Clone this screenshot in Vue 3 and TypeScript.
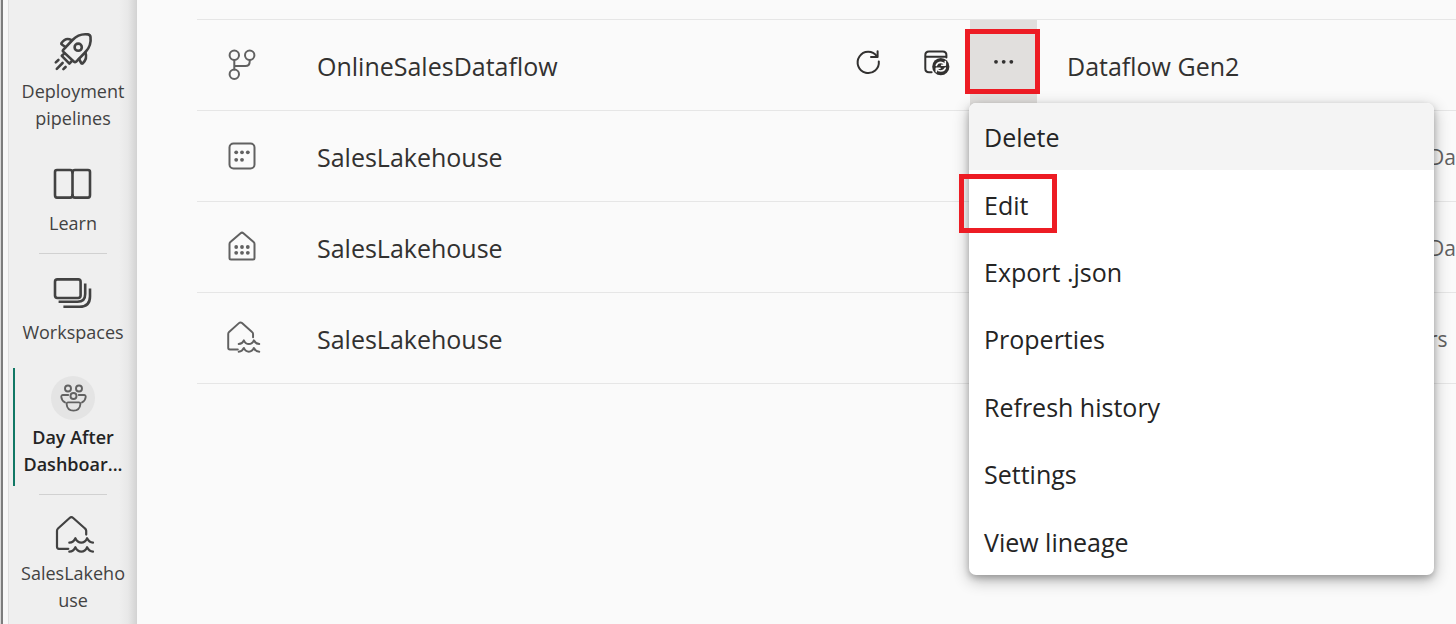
<script setup lang="ts">
import { ref } from 'vue'

type RowIcon = 'dataflow' | 'dataset' | 'endpoint' | 'lakehouse'

interface Row {
  icon: RowIcon
  name: string
  type: string
  owner: string
  open: boolean
}

const rows = ref<Row[]>([
  { icon: 'dataflow', name: 'OnlineSalesDataflow', type: 'Dataflow Gen2', owner: '', open: true },
  { icon: 'dataset', name: 'SalesLakehouse', type: '', owner: 'Da', open: false },
  { icon: 'endpoint', name: 'SalesLakehouse', type: '', owner: 'Da', open: false },
  { icon: 'lakehouse', name: 'SalesLakehouse', type: '', owner: 'rs', open: false },
])

const menuItems = [
  { label: 'Delete', hovered: true, marked: false },
  { label: 'Edit', hovered: false, marked: true },
  { label: 'Export .json', hovered: false, marked: false },
  { label: 'Properties', hovered: false, marked: false },
  { label: 'Refresh history', hovered: false, marked: false },
  { label: 'Settings', hovered: false, marked: false },
  { label: 'View lineage', hovered: false, marked: false },
]
</script>

<template>
  <div class="app">
    <div class="frame"></div>
    <nav class="rail">
      <a class="item" href="#">
        <svg class="nav-icon" viewBox="0 0 40 40">
          <path d="M10 18.2 L19.5 8 C24.5 2.8 29.5 1.6 35 2.4 Q37.2 2.7 37.5 5 C38.3 11 36.8 15.5 32.5 20 L23 29.8 Q22 30.6 21 29.8 L10.2 19.6 Q9.4 18.9 10 18.2 Z" />
          <circle cx="25.2" cy="15.2" r="3.6" />
          <path d="M18.5 8.2 C14.5 5.8 11 7.4 8.4 11.2 Q8 12 8.8 12.5 L12.5 15" />
          <path d="M32.4 20.5 C34 25 32.8 28.6 29.6 31.4 Q28.8 32 28.2 31 L26 27" />
          <path d="M11.5 21.4 L8.8 23.8 L16.4 31.6 L19 28.8" />
          <path d="M2.8 30.4 L5.4 28 M3.8 36.8 L9.6 31 M10.4 37.2 L12.6 35" />
        </svg>
        <span class="label">Deployment pipelines</span>
      </a>
      <a class="item" href="#">
        <svg class="nav-icon" viewBox="0 0 40 40">
          <path d="M19.5 8.5 Q19.5 6 17 6 H4 Q2 6 2 8 V31 Q2 33.6 4 33.6 H17 Q19.5 33.6 19.5 31 Z" />
          <path d="M19.5 8.5 Q19.5 6 22 6 H35 Q37 6 37 8 V31 Q37 33.6 35 33.6 H22 Q19.5 33.6 19.5 31" />
        </svg>
        <span class="label">Learn</span>
      </a>
      <hr class="divider" />
      <a class="item" href="#">
        <svg class="nav-icon" viewBox="0 0 40 40">
          <rect x="2" y="6.4" width="25.6" height="18.6" rx="2.4" />
          <path class="butt" d="M5.6 28.8 H24.5 C29.5 28.8 32.2 26 32.2 21 V10.4" />
          <path class="butt" d="M10.4 33.8 H26.5 C33.4 33.8 37 30 37 23.5 V15.4" />
        </svg>
        <span class="label">Workspaces</span>
      </a>
      <a class="item active" href="#" aria-current="page">
        <svg class="avatar" viewBox="0 0 44 44">
          <circle cx="17" cy="12.5" r="3" />
          <circle cx="28" cy="12.5" r="3" />
          <circle cx="22.5" cy="20" r="3" />
          <path d="M17.2 19 H12 Q10.2 19 10.3 21 Q10.8 25 14 26.4" />
          <path d="M27.8 19 H33 Q34.8 19 34.7 21 Q34.2 25 31 26.4" />
          <path d="M17.2 26.4 H27.8 Q29.5 26.4 29.4 28 C29 32.6 26.2 34.6 22.5 34.6 C18.8 34.6 16 32.6 15.6 28 Q15.5 26.4 17.2 26.4 Z" />
        </svg>
        <span class="label">Day After Dashboar...</span>
      </a>
      <hr class="divider" />
      <a class="item" href="#">
        <svg class="nav-icon thin" viewBox="0 0 40 40">
          <path d="M15.3 34.8 H6 Q4 34.8 4 32.8 V16.8 Q4 15.4 5 14.5 L16.6 4 Q18.4 2.4 20.2 4 L32 14.5 Q33.2 15.4 33.2 16.8 V20.6" />
          <path d="M16.3 28.6 Q20.6 28.4 22.4 24.2 Q24.4 28.6 28.3 28.6 Q32.2 28.6 34.1 24.2 Q36.2 28.4 40 28.6" />
          <path d="M16.3 37.6 Q20.6 37.4 22.4 33.2 Q24.4 37.6 28.3 37.6 Q32.2 37.6 34.1 33.2 Q36.2 37.4 40 37.6" />
        </svg>
        <span class="label split">SalesLakehouse</span>
      </a>
    </nav>

    <main class="content">
      <table class="list">
        <colgroup>
          <col class="c-icon" />
          <col />
          <col class="c-actions" />
          <col class="c-type" />
          <col class="c-owner" />
        </colgroup>
        <tbody>
          <tr v-for="(row, i) in rows" :key="i">
            <td>
              <svg v-if="row.icon === 'dataflow'" class="row-icon" viewBox="0 0 40 40">
                <circle cx="12.3" cy="10.3" r="4.7" />
                <circle cx="27.7" cy="10.3" r="4.7" />
                <circle cx="12.3" cy="29.3" r="4.7" />
                <path d="M12.3 15 V24.6 M27.7 15 V16.5 Q27.7 21 23.4 21 H12.3" />
              </svg>
              <svg v-else-if="row.icon === 'dataset'" class="row-icon" viewBox="0 0 40 40">
                <rect x="7.5" y="7.5" width="25" height="25" rx="4" />
                <g class="dots">
                  <circle cx="14.2" cy="16.3" r="1.9" /><circle cx="20" cy="16.3" r="1.9" /><circle cx="25.8" cy="16.3" r="1.9" />
                  <circle cx="14.2" cy="23.8" r="1.9" /><circle cx="20" cy="23.8" r="1.9" />
                </g>
              </svg>
              <svg v-else-if="row.icon === 'endpoint'" class="row-icon" viewBox="0 0 40 40">
                <path d="M7.5 17 Q7.5 15.8 8.4 15 L18.6 6.2 Q20 5 21.4 6.2 L31.6 15 Q32.5 15.8 32.5 17 V31 Q32.5 32.5 31 32.5 H9 Q7.5 32.5 7.5 31 Z" />
                <g class="dots">
                  <circle cx="14.2" cy="20" r="1.9" /><circle cx="20" cy="20" r="1.9" /><circle cx="25.8" cy="20" r="1.9" />
                  <circle cx="14.2" cy="25.8" r="1.9" /><circle cx="20" cy="25.8" r="1.9" /><circle cx="25.8" cy="25.8" r="1.9" />
                </g>
              </svg>
              <svg v-else class="row-icon small" viewBox="-3.3 -2 47 47">
                <path d="M15.3 35 H6 Q4 35 4 33 V16.8 Q4 15.4 5 14.5 L16.6 4 Q18.4 2.4 20.2 4 L32 14.5 Q33.2 15.4 33.2 16.8 V20.6" />
                <path d="M16.3 28.6 Q20.6 28.4 22.4 24.2 Q24.4 28.6 28.3 28.6 Q32.2 28.6 34.1 24.2 Q36.2 28.4 40.5 28.6" />
                <path d="M16.3 37.6 Q20.6 37.4 22.4 33.2 Q24.4 37.6 28.3 37.6 Q32.2 37.6 34.1 33.2 Q36.2 37.4 40.5 37.6" />
              </svg>
            </td>
            <td class="text">{{ row.name }}</td>
            <td>
              <div class="actions">
                <template v-if="row.open">
                  <button type="button" aria-label="Refresh now">
                    <svg viewBox="0 0 40 40">
                      <path d="M30.8 19.4 A10.6 10.6 0 1 1 28.8 14.2" />
                      <path d="M29.6 9.2 V15 H23" />
                    </svg>
                  </button>
                  <button type="button" aria-label="Schedule refresh">
                    <svg viewBox="0 0 40 40">
                      <path d="M15.6 30.2 H13 Q9.3 30.2 9.3 26.5 V13 Q9.3 9.4 13 9.4 H26.8 Q30.4 9.4 30.4 13 V15.4 M9.3 14.8 H30.4" />
                      <circle class="solid" cx="24.8" cy="24.7" r="8.6" />
                      <path class="cut" d="M20.3 23.4 Q21.4 20.4 24.8 20.4 Q27.3 20.4 28.8 22.6 M29.3 19.6 V23.2 H25.6 M29.3 26 Q28.2 29 24.8 29 Q22.3 29 20.8 26.8 M20.3 29.8 V26.2 H24" />
                    </svg>
                  </button>
                  <div class="more">
                    <button type="button" aria-label="More options" aria-haspopup="menu" aria-expanded="true">
                      <svg viewBox="0 0 40 40">
                        <g class="dots">
                          <circle cx="12" cy="19.8" r="1.9" /><circle cx="19.7" cy="19.8" r="1.9" /><circle cx="27.3" cy="19.8" r="1.9" />
                        </g>
                      </svg>
                    </button>
                    <div class="menu" role="menu">
                      <button
                        v-for="item in menuItems"
                        :key="item.label"
                        type="button"
                        role="menuitem"
                        class="menu-item"
                        :class="{ hovered: item.hovered, marked: item.marked }"
                      >{{ item.label }}</button>
                    </div>
                  </div>
                </template>
              </div>
            </td>
            <td class="text type">{{ row.type }}</td>
            <td class="text owner">{{ row.owner }}</td>
          </tr>
        </tbody>
      </table>
    </main>
  </div>
</template>

<style>
body {
  margin: 0;
  background: #fafafa;
}
</style>

<style scoped>
.app {
  display: flex;
  min-height: 100vh;
  overflow: hidden;
  background: #fafafa;
  color: #323130;
  font-family: "Open Sans", "Noto Sans", sans-serif;
}
.app *,
.app *::before,
.app *::after {
  box-sizing: border-box;
}
.frame {
  flex: none;
  width: 8px;
  border-left: 1px solid #d8d8d8;
  background: linear-gradient(90deg, #7d7d7d 2px, #f8f8f8 2px);
}
.rail {
  flex: none;
  width: 129px;
  padding-top: 24px;
  border-left: 1px solid #dfdfdf;
  background: linear-gradient(90deg, #efefef 110px, #e8e8e8 119px, #d2d2d2 128px);
}
.item {
  position: relative;
  display: flex;
  flex-direction: column;
  align-items: center;
  gap: 6px;
  padding: 8px 10px;
  color: #424242;
  font-size: 18px;
  line-height: 27px;
  text-align: center;
  text-decoration: none;
}
.item + .item {
  margin-top: 14px;
}
.item:first-child {
  margin-bottom: 16px;
}
.label {
  width: 108px;
}
.split {
  word-break: break-all;
}
.active {
  gap: 4px;
  color: #242424;
  font-weight: 600;
}
.active::before {
  content: "";
  position: absolute;
  top: 0;
  bottom: 0;
  left: 4px;
  width: 2px;
  background: #117865;
}
.divider {
  width: 68px;
  height: 1px;
  margin: 8px auto 11px;
  border: 0;
  background: #d1d1d1;
}
svg {
  display: block;
  width: 40px;
  height: 40px;
  overflow: visible;
  fill: none;
  stroke: #424242;
  stroke-width: 2;
  stroke-linecap: round;
  stroke-linejoin: round;
}
.nav-icon {
  stroke-width: 2.6;
}
.thin {
  stroke-width: 2.2;
}
.butt {
  stroke-linecap: butt;
}
.avatar {
  width: 44px;
  height: 44px;
  border-radius: 50%;
  background: #e4e4e4;
  stroke: #616161;
  stroke-width: 1.9;
}
.content {
  flex: 1;
  min-width: 0;
  padding: 19px 0 0 60px;
}
.list {
  width: 100%;
  table-layout: fixed;
  border-collapse: separate;
  border-spacing: 0;
  border-top: 1px solid #e6e6e6;
  font-size: 25px;
}
.list td {
  height: 91px;
  padding: 0;
  border-bottom: 1px solid #e6e6e6;
  white-space: nowrap;
}
.list .text {
  padding-top: 2px;
}
.c-icon {
  width: 120px;
}
.c-actions {
  width: 203px;
}
.c-type {
  width: 392px;
}
.c-owner {
  width: 27px;
}
.row-icon {
  margin-left: 25px;
  stroke: #616161;
}
.small {
  stroke-width: 2.3;
}
.dots circle {
  fill: #616161;
  stroke: none;
}
.list .type {
  padding-left: 30px;
}
.list .owner {
  color: #616161;
  font-size: 21px;
}
.actions {
  display: flex;
  justify-content: flex-end;
  height: 90px;
}
.actions button {
  font: inherit;
  color: #242424;
  border: 0;
  background: none;
}
.actions > button,
.more > button {
  display: flex;
  justify-content: center;
  width: 68px;
  height: 90px;
  padding: 22px 0 0;
}
.more > button {
  width: 67px;
}
.actions svg {
  stroke: #323130;
}
.actions .dots circle,
.solid {
  fill: #323130;
  stroke: none;
}
.actions .cut {
  stroke: #fafafa;
  stroke-width: 1.6;
}
.more {
  position: relative;
  background: #e1dfdd;
}
.more::after {
  content: "";
  position: absolute;
  top: 9px;
  left: -5px;
  width: 75px;
  height: 65px;
  border: 5px solid #ed1c24;
  pointer-events: none;
}
.menu {
  position: absolute;
  z-index: 2;
  top: 83px;
  left: -1px;
  display: grid;
  grid-auto-rows: 1fr;
  width: 465px;
  min-height: 472px;
  border-radius: 7px;
  background: #fff;
  box-shadow: 0 5px 16px rgba(0, 0, 0, 0.3), 0 3px 6px rgba(0, 0, 0, 0.2);
}
.menu .menu-item {
  position: relative;
  padding: 1px 15px 0;
  text-align: left;
}
.menu .hovered {
  border-radius: 7px 7px 0 0;
  background: #f4f4f4;
}
.marked::after {
  content: "";
  position: absolute;
  top: 4px;
  left: -10px;
  width: 98px;
  height: 59px;
  border: 5px solid #ed1c24;
}
</style>
